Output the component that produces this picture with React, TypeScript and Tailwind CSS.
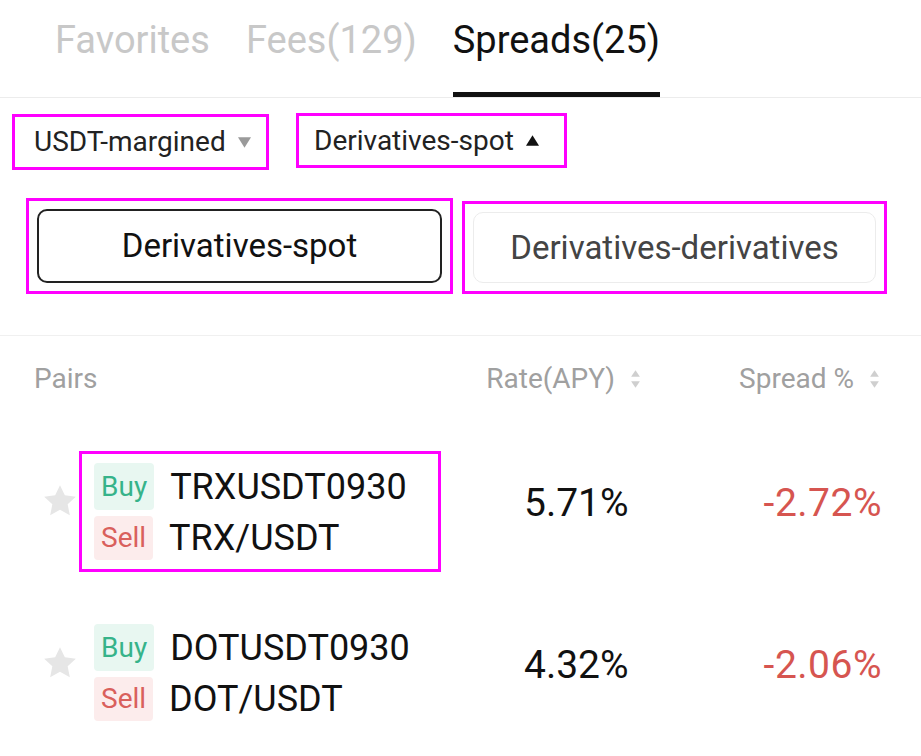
import { ReactNode } from 'react';

const MAGENTA = 'border-[3px] border-[#ff00ff]';

function Tab({ label, active }: { label: string; active?: boolean }) {
  return (
    <div className="flex h-full flex-col justify-between">
      <span
        className={`pt-[14px] text-[38px] leading-[52px] ${active ? 'text-[#111]' : 'text-[#c8c8c8]'}`}
      >
        {label}
      </span>
      <div className={`h-[5px] ${active ? 'bg-[#111]' : 'bg-transparent'}`} />
    </div>
  );
}

function Triangle({ up, color }: { up?: boolean; color: string }) {
  return (
    <svg viewBox="0 0 12 10" className="h-[13px] w-[17px]" aria-hidden="true">
      <path d={up ? 'M6 1 L11 9 L1 9 Z' : 'M1 1 L11 1 L6 9 Z'} fill={color} />
    </svg>
  );
}

function SortIcon() {
  return (
    <svg viewBox="0 0 10 20" className="h-[22px] w-[11px]" aria-hidden="true">
      <path d="M5 2 L9 8 L1 8 Z" fill="#cfcfcf" />
      <path d="M1 12 L9 12 L5 18 Z" fill="#cfcfcf" />
    </svg>
  );
}

function Star() {
  return (
    <svg viewBox="0 0 24 24" className="h-[40px] w-[40px]" aria-hidden="true">
      <path
        d="M12 2.5l2.9 6.1 6.6.8-4.9 4.6 1.3 6.6L12 17.3l-5.9 3.3 1.3-6.6-4.9-4.6 6.6-.8z"
        fill="#e6e6e6"
      />
    </svg>
  );
}

function Badge({ kind }: { kind: 'Buy' | 'Sell' }) {
  const cls =
    kind === 'Buy'
      ? 'bg-[#e8f7f1] text-[#36b38a]'
      : 'bg-[#fcecec] text-[#d9605c]';
  return (
    <span className={`flex h-full items-center rounded-[4px] px-[7px] text-[28px] ${cls}`}>{kind}</span>
  );
}

function Pair({ future, spot }: { future: string; spot: string }) {
  return (
    <div className="flex flex-col gap-[6px]">
      <div className="flex h-[47px] items-center gap-[16px]">
        <Badge kind="Buy" />
        <span className="text-[36px] text-[#111]">{future}</span>
      </div>
      <div className="flex h-[44px] items-center gap-[16px]">
        <Badge kind="Sell" />
        <span className="text-[36px] text-[#111]">{spot}</span>
      </div>
    </div>
  );
}

function Row({
  future,
  spot,
  rate,
  spread,
  boxed,
}: {
  future: string;
  spot: string;
  rate: string;
  spread: string;
  boxed?: boolean;
}) {
  let pair: ReactNode = <Pair future={future} spot={spot} />;
  if (boxed) {
    pair = <div className={`${MAGENTA} h-[121px] w-[362px] pl-[12px] pt-[9px]`}>{pair}</div>;
  } else {
    pair = <div className="h-[121px] w-[362px] pl-[15px] pt-[11px]">{pair}</div>;
  }
  return (
    <div className="flex items-center pl-[40px]">
      <div className="-mt-[22px] -mr-[1px]">
        <Star />
      </div>
      {pair}
      <span className="-mt-[16px] ml-[83px] text-[39px] text-[#111]">{rate}</span>
      <span className="-mt-[16px] ml-auto pr-[39px] text-[39px] tracking-[0.5px] text-[#d65550]">
        {spread}
      </span>
    </div>
  );
}

export default function App() {
  return (
    <div
      className="h-[756px] w-[921px] overflow-hidden bg-white"
      style={{ fontFamily: 'Roboto, "Noto Sans", sans-serif' }}
    >
      {/* tabs */}
      <div className="flex h-[98px] gap-[36px] border-b border-[#ececec] pl-[55px]">
        <Tab label="Favorites" />
        <Tab label="Fees(129)" />
        <Tab label="Spreads(25)" active />
      </div>

      {/* filters */}
      <div className="flex items-start gap-[27px] pl-[12px] pt-[16px]">
        <div className={`${MAGENTA} flex h-[56px] w-[257px] items-center gap-[10px] pl-[19px]`}>
          <span className="text-[28px] text-[#222]">USDT-margined</span>
          <Triangle color="#9a9a9a" />
        </div>
        <div className={`${MAGENTA} -mt-[1px] flex h-[55px] w-[271px] items-center gap-[10px] pl-[15px]`}>
          <span className="text-[28px] text-[#222]">Derivatives-spot</span>
          <Triangle up color="#111" />
        </div>
      </div>

      {/* type switch */}
      <div className="flex items-end gap-[9px] pl-[26px] pt-[28px]">
        <div className={`${MAGENTA} h-[96px] w-[427px] p-[8px]`}>
          <div className="flex h-full items-center justify-center rounded-[10px] border-2 border-[#222] text-[33px] text-[#111]">
            Derivatives-spot
          </div>
        </div>
        <div className={`${MAGENTA} h-[93px] w-[425px] p-[8px]`}>
          <div className="flex h-full items-center justify-center rounded-[10px] border border-[#ececec] text-[33px] text-[#444]">
            Derivatives-derivatives
          </div>
        </div>
      </div>

      <div className="mt-[41px] border-t border-[#f0f0f0]" />

      {/* header */}
      <div className="flex h-[86px] items-center pl-[34px] pr-[41px] text-[28px] text-[#a0a0a0]">
        <span>Pairs</span>
        <span className="ml-auto flex items-center gap-[15px]">
          Rate(APY) <SortIcon />
        </span>
        <span className="ml-[98px] flex items-center gap-[15px]">
          Spread % <SortIcon />
        </span>
      </div>

      <div className="mt-[29px] flex flex-col gap-[41px]">
        <Row future="TRXUSDT0930" spot="TRX/USDT" rate="5.71%" spread="-2.72%" boxed />
        <Row future="DOTUSDT0930" spot="DOT/USDT" rate="4.32%" spread="-2.06%" />
      </div>
    </div>
  );
}
